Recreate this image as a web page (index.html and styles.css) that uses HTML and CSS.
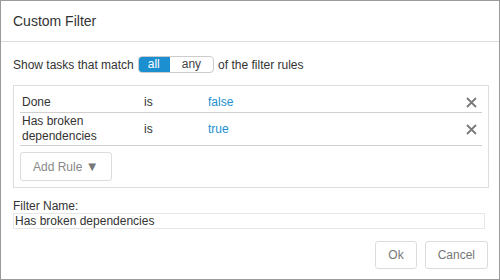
FILE: index.html
```html
<!DOCTYPE html>
<html lang="en">
<head>
  <meta charset="UTF-8" />
  <title>Custom Filter</title>
  <link rel="stylesheet" href="styles.css">
</head>
<body>
  <div class="dialog">
    <header class="dialog-header">Custom Filter</header>

    <div class="dialog-body">
      <div class="match-line">
        <span>Show tasks that match</span>
        <div class="toggle">
          <span class="toggle-opt active">all</span>
          <span class="toggle-opt">any</span>
        </div>
        <span>of the filter rules</span>
      </div>

      <div class="rules">
        <div class="rule">
          <div class="rule-field">Done</div>
          <div class="rule-op">is</div>
          <div class="rule-value">false</div>
          <div class="rule-remove">
            <svg width="11" height="11" viewBox="0 0 11 11"><path d="M1 1L10 10M10 1L1 10" stroke="#7a7a7a" stroke-width="1.8" fill="none"/></svg>
          </div>
        </div>
        <div class="rule">
          <div class="rule-field">Has broken<br>dependencies</div>
          <div class="rule-op">is</div>
          <div class="rule-value">true</div>
          <div class="rule-remove">
            <svg width="11" height="11" viewBox="0 0 11 11"><path d="M1 1L10 10M10 1L1 10" stroke="#7a7a7a" stroke-width="1.8" fill="none"/></svg>
          </div>
        </div>
        <button class="btn add-rule">Add Rule <span class="caret">&#9660;</span></button>
      </div>

      <div class="name-field">
        <label>Filter Name:</label>
        <div class="name-input">Has broken dependencies</div>
      </div>
    </div>

    <footer class="dialog-footer">
      <button class="btn">Ok</button>
      <button class="btn">Cancel</button>
    </footer>
  </div>
</body>
</html>
```

FILE: styles.css
```css
* {
  margin: 0;
  padding: 0;
  box-sizing: border-box;
}
html, body {
  width: 500px;
  height: 280px;
  background: #fff;
  font-family: "Liberation Sans", Arial, sans-serif;
  font-size: 12px;
  color: #333;
}
.dialog {
  width: 500px;
  height: 280px;
  border: 1px solid #9a9a9a;
  display: flex;
  flex-direction: column;
}
.dialog-header {
  height: 41px;
  line-height: 40px;
  padding-left: 12px;
  font-size: 14px;
  color: #333;
  border-bottom: 1px solid #dcdcdc;
}
.dialog-body {
  padding: 14px 10px 0 12px;
}
.match-line {
  display: flex;
  align-items: center;
  gap: 4px;
  height: 17px;
}
.toggle {
  display: flex;
  height: 17px;
  border: 1px solid #ccc;
  border-radius: 4px;
  overflow: hidden;
}
.toggle-opt {
  line-height: 15px;
  padding: 0 12px;
  color: #444;
}
.toggle-opt.active {
  background: #1b8fcf;
  color: #fff;
  padding: 0 10px;
  margin: -1px 0 -1px -1px;
  line-height: 17px;
}
.rules {
  margin-top: 12px;
  border: 1px solid #dedede;
  padding: 7px 6px 6px 6px;
}
.rule {
  display: grid;
  grid-template-columns: 122px 64px 1fr 24px;
  align-items: center;
  padding: 2px 0 2px 2px;
  line-height: 15px;
  border-bottom: 1px solid #cfcfcf;
}
.rule + .rule {
  padding: 1px 0 1px 2px;
}
.rule-value {
  color: #1b8fcf;
}
.rule-remove {
  display: flex;
  justify-content: flex-end;
  padding-right: 5px;
}
.rule-remove svg {
  display: block;
}
.btn {
  font-family: "Liberation Sans", Arial, sans-serif;
  font-size: 12px;
  color: #777;
  background: #fff;
  border: 1px solid #dcdcdc;
  border-radius: 3px;
  height: 28px;
  padding: 0 12px;
}
.add-rule {
  margin-top: 6px;
  height: 29px;
  padding: 0 12px;
  color: #888;
}
.caret {
  font-size: 13px;
  color: #777;
}
.name-field {
  margin-top: 11px;
  padding-right: 4px;
}
.name-field label {
  display: block;
  line-height: 14px;
  color: #333;
}
.name-input {
  height: 16px;
  line-height: 14px;
  border: 1px solid #e6e6e6;
  padding-left: 1px;
  color: #333;
}
.dialog-footer {
  margin-top: auto;
  display: flex;
  justify-content: flex-end;
  gap: 8px;
  padding: 0 11px 10px 0;
}
```
